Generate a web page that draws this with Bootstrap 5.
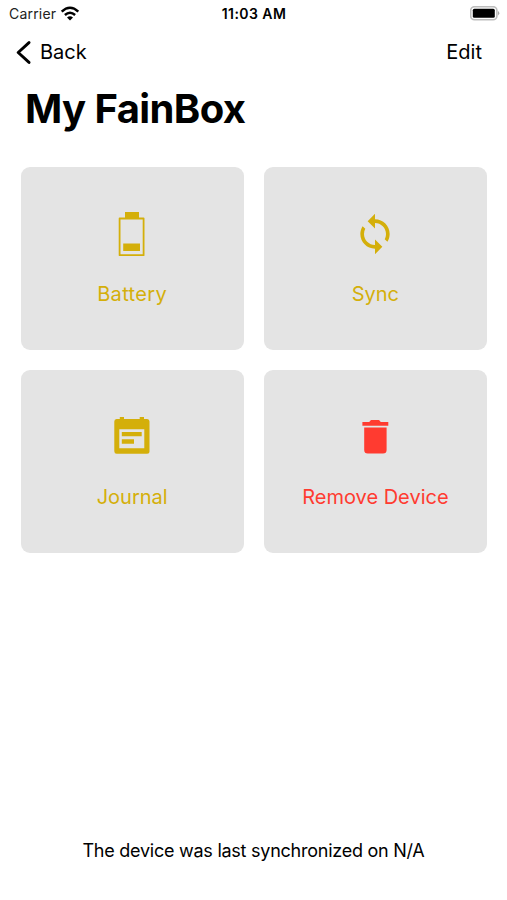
<!DOCTYPE html>
<html lang="en">
<head>
<meta charset="utf-8">
<meta name="viewport" content="width=device-width, initial-scale=1">
<title>My FainBox</title>
<link href="https://cdn.jsdelivr.net/npm/bootstrap@5.3.0/dist/css/bootstrap.min.css" rel="stylesheet">
<style>
body { font-family: Inter, "Liberation Sans", sans-serif; color: #000; background: #fff; }
svg { display: block; flex: none; }
.statusbar { height: 28px; padding: 0 7px 0 9px; font-size: 14px; line-height: 28px; }
.statusbar > * { flex: 1 1 0; }
.carrier { color: #222; letter-spacing: .2px; }
.clock { font-size: 14px; letter-spacing: .45px; margin-left: -1px; }
.topnav { height: 48px; padding: 1px 25px 0 16px; font-size: 20px; line-height: 47px; }
.topnav a { color: #000; }
.screen-title { font-size: 40px; line-height: 50px; letter-spacing: -.6px; padding: 8px 0 0 25px; height: 91px; }
.tiles { padding: 0 20px 0 20.5px; }
.tile-row { --bs-gutter-x: 20px; --bs-gutter-y: 20px; }
.tile { height: 183px; background: #e4e4e4; border-radius: 9px; color: #d4af0a; padding-top: 45px; font-size: 20px; }
.tile span { line-height: 28px; margin-top: 23.5px; }
.label-wide { letter-spacing: .35px; }
.tile-danger { color: #ff3b30; }
.sync-note { font-size: 18px; line-height: 28px; letter-spacing: -.25px; padding-bottom: 35px; }
</style>
</head>
<body>
<div class="vh-100 d-flex flex-column overflow-hidden">
  <header>
    <div class="statusbar d-flex align-items-center">
      <div class="carrier d-flex align-items-center"><span>Carrier</span>
        <svg class="ms-1" width="20" height="16" viewBox="0 0 20 16" fill="none" stroke="#000" stroke-width="2.5"><path d="M1.7 5.6Q10 -2.1 18.3 5.6"/><path d="M4.9 9Q10 4.4 15.1 9"/><path d="M10 14.4 7 11.4Q10 8.9 13 11.4Z" fill="#000" stroke="none"/></svg>
      </div>
      <div class="clock fw-semibold text-center">11:03 AM</div>
      <div class="d-flex justify-content-end">
        <svg width="30" height="16" viewBox="0 0 30 16"><rect x=".7" y=".7" width="26.2" height="13" rx="3.8" fill="#fff" stroke="#bdbdbd" stroke-width="1.6"/><rect x="2.8" y="2.7" width="22" height="9" rx="1.5"/><path d="M28 5Q30.6 7.2 28 9.4Z" fill="#aaa"/></svg>
      </div>
    </div>
    <nav class="topnav d-flex justify-content-between align-items-center">
      <a href="#" class="d-flex align-items-center text-decoration-none"><svg width="16" height="24" viewBox="0 0 16 24" fill="none" stroke="#000" stroke-width="2.9" stroke-linecap="round" stroke-linejoin="round"><path d="M13 1.6 2.2 11.5 13 21.4"/></svg><span class="ms-2">Back</span></a>
      <a href="#" class="text-decoration-none">Edit</a>
    </nav>
    <h1 class="screen-title fw-bold m-0">My FainBox</h1>
  </header>
  <main>
    <div class="tiles">
      <div class="row tile-row">
        <div class="col-6"><div class="tile d-flex flex-column align-items-center">
          <svg width="44" height="44" viewBox="0 0 44 44" fill="currentColor"><path d="M15 0H29V6H15Z"/><path d="M9.6 6.5H33.6V43.2H9.6Z" fill="none" stroke="currentColor" stroke-width="1.8" stroke-linejoin="round"/><path d="M13.2 31.5H30V39H13.2Z"/></svg>
          <span class="label-wide">Battery</span></div></div>
        <div class="col-6"><div class="tile d-flex flex-column align-items-center">
          <svg width="44" height="44" viewBox="0 0 24 24" fill="currentColor"><path d="M12 4V1L8 5l4 4V6c3.31 0 6 2.69 6 6 0 1.01-.25 1.97-.7 2.8l1.46 1.46C19.54 15.03 20 13.57 20 12c0-4.42-3.58-8-8-8zm0 14c-3.31 0-6-2.69-6-6 0-1.01.25-1.97.7-2.8L5.24 7.74C4.46 8.97 4 10.43 4 12c0 4.42 3.58 8 8 8v3l4-4-4-4v3z"/></svg>
          <span>Sync</span></div></div>
        <div class="col-6"><div class="tile d-flex flex-column align-items-center">
          <svg width="44" height="44" viewBox="0 0 44 44" fill="currentColor"><path fill-rule="evenodd" d="M6.5 4H9.8V2H14V4H29.7V2H34V4H37.2Q39.5 4 39.5 6.5V36.2Q39.5 38.7 37 38.7H6.7Q4.3 38.7 4.3 36.2V6.5Q4.3 4 6.5 4ZM9.3 14.3V33.3H34.3V14.3Z"/><path d="M11.8 17H31.7V21.3H11.8ZM11.8 24.2H24V28.7H11.8Z"/></svg>
          <span>Journal</span></div></div>
        <div class="col-6"><div class="tile tile-danger d-flex flex-column align-items-center">
          <svg width="44" height="44" viewBox="0 0 44 44" fill="currentColor"><path d="M9.4 7H16.2L18 5H26L27.8 7H35.3V10.8H9.4ZM11.2 12.6H33.6V35Q33.6 38.5 30 38.5H14.8Q11.2 38.5 11.2 35Z"/></svg>
          <span>Remove Device</span></div></div>
      </div>
    </div>
  </main>
  <footer class="sync-note text-center mt-auto"><span>The device was last synchronized on N/A</span></footer>
</div>
<script src="https://cdn.jsdelivr.net/npm/bootstrap@5.3.0/dist/js/bootstrap.bundle.min.js"></script>
</body>
</html>
